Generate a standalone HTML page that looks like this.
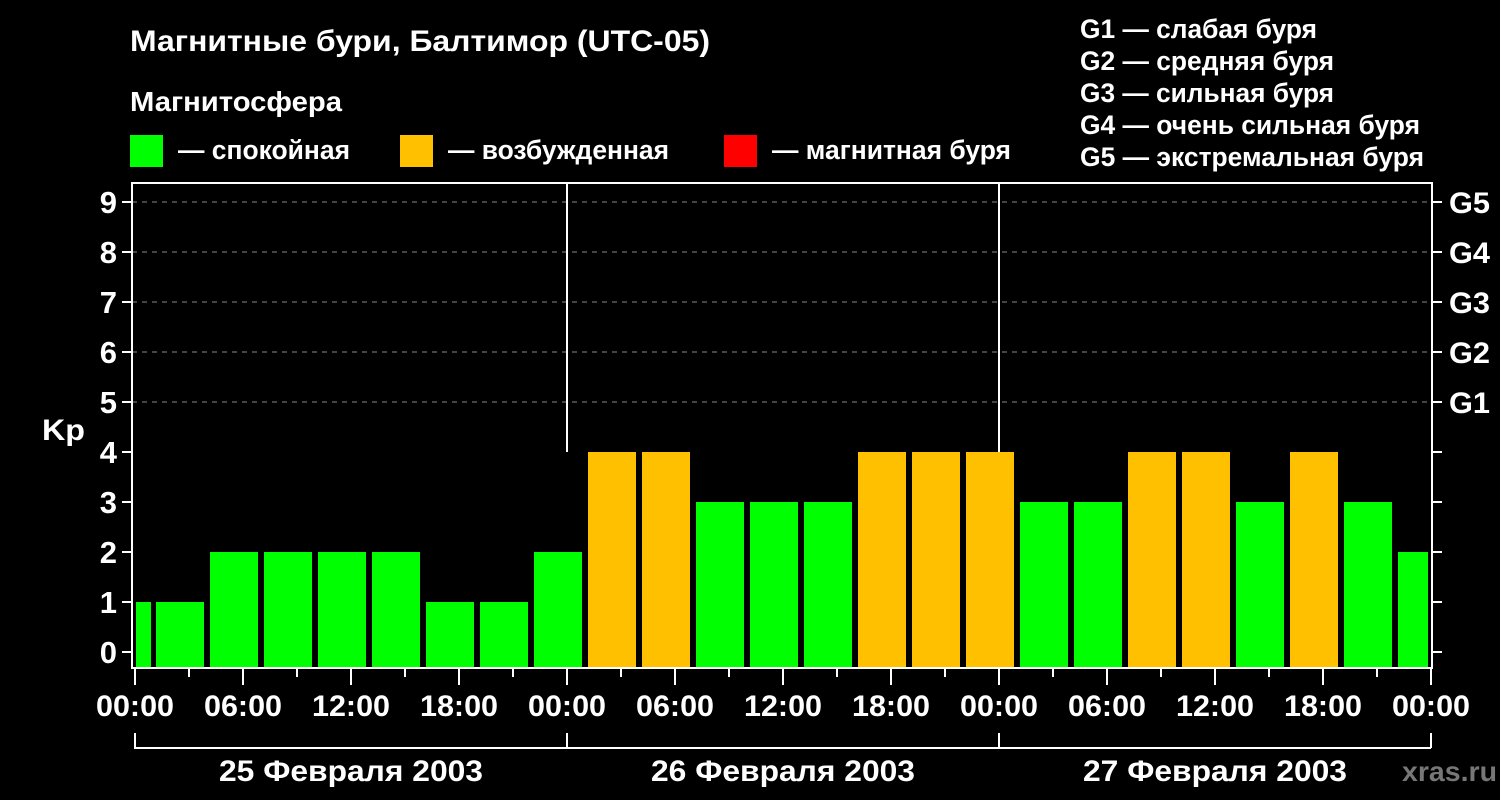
<!DOCTYPE html>
<html><head><meta charset="utf-8"><style>
html,body{margin:0;padding:0;background:#000;}
svg{display:block;font-family:"Liberation Sans",Arial,sans-serif;font-weight:bold;}
</style></head><body>
<svg width="1500" height="800" viewBox="0 0 1500 800" xmlns="http://www.w3.org/2000/svg">
<rect width="1500" height="800" fill="#000"/>
<g fill="#fff">
<text x="130" y="51" font-size="30" textLength="580" lengthAdjust="spacingAndGlyphs">Магнитные бури, Балтимор (UTC-05)</text>
<text x="130" y="111" font-size="28" textLength="212" lengthAdjust="spacingAndGlyphs">Магнитосфера</text>
<text x="178" y="159" font-size="27" textLength="172" lengthAdjust="spacingAndGlyphs">— спокойная</text>
<text x="448" y="159" font-size="27" textLength="221" lengthAdjust="spacingAndGlyphs">— возбужденная</text>
<text x="772" y="159" font-size="27" textLength="239" lengthAdjust="spacingAndGlyphs">— магнитная буря</text>
<text x="1080" y="38" font-size="27" textLength="237" lengthAdjust="spacingAndGlyphs">G1 — слабая буря</text>
<text x="1080" y="70" font-size="27" textLength="254" lengthAdjust="spacingAndGlyphs">G2 — средняя буря</text>
<text x="1080" y="102" font-size="27" textLength="254" lengthAdjust="spacingAndGlyphs">G3 — сильная буря</text>
<text x="1080" y="134" font-size="27" textLength="340" lengthAdjust="spacingAndGlyphs">G4 — очень сильная буря</text>
<text x="1080" y="166" font-size="27" textLength="344" lengthAdjust="spacingAndGlyphs">G5 — экстремальная буря</text>
</g>
<rect x="130" y="135" width="33" height="32" fill="#00ff00"/>
<rect x="400" y="135" width="33" height="32" fill="#ffc000"/>
<rect x="724" y="135" width="33" height="32" fill="#ff0000"/>

<g stroke="#888" stroke-width="1" stroke-dasharray="5,5">
<line x1="132" y1="202" x2="1432" y2="202"/>
<line x1="132" y1="252" x2="1432" y2="252"/>
<line x1="132" y1="302" x2="1432" y2="302"/>
<line x1="132" y1="352" x2="1432" y2="352"/>
<line x1="132" y1="402" x2="1432" y2="402"/>
</g>

<g>
<rect x="136" y="602" width="15" height="66" fill="#00ff00"/>
<rect x="156" y="602" width="48" height="66" fill="#00ff00"/>
<rect x="210" y="552" width="48" height="116" fill="#00ff00"/>
<rect x="264" y="552" width="48" height="116" fill="#00ff00"/>
<rect x="318" y="552" width="48" height="116" fill="#00ff00"/>
<rect x="372" y="552" width="48" height="116" fill="#00ff00"/>
<rect x="426" y="602" width="48" height="66" fill="#00ff00"/>
<rect x="480" y="602" width="48" height="66" fill="#00ff00"/>
<rect x="534" y="552" width="48" height="116" fill="#00ff00"/>
<rect x="588" y="452" width="48" height="216" fill="#ffc000"/>
<rect x="642" y="452" width="48" height="216" fill="#ffc000"/>
<rect x="696" y="502" width="48" height="166" fill="#00ff00"/>
<rect x="750" y="502" width="48" height="166" fill="#00ff00"/>
<rect x="804" y="502" width="48" height="166" fill="#00ff00"/>
<rect x="858" y="452" width="48" height="216" fill="#ffc000"/>
<rect x="912" y="452" width="48" height="216" fill="#ffc000"/>
<rect x="966" y="452" width="48" height="216" fill="#ffc000"/>
<rect x="1020" y="502" width="48" height="166" fill="#00ff00"/>
<rect x="1074" y="502" width="48" height="166" fill="#00ff00"/>
<rect x="1128" y="452" width="48" height="216" fill="#ffc000"/>
<rect x="1182" y="452" width="48" height="216" fill="#ffc000"/>
<rect x="1236" y="502" width="48" height="166" fill="#00ff00"/>
<rect x="1290" y="452" width="48" height="216" fill="#ffc000"/>
<rect x="1344" y="502" width="48" height="166" fill="#00ff00"/>
<rect x="1398" y="552" width="30" height="116" fill="#00ff00"/>
</g>

<line x1="567" y1="182" x2="567" y2="452" stroke="#fff" stroke-width="2"/>
<line x1="999" y1="182" x2="999" y2="452" stroke="#fff" stroke-width="2"/>

<rect x="132" y="183" width="1300" height="485" fill="none" stroke="#fff" stroke-width="2"/>

<g stroke="#fff" stroke-width="2">
<path d="M122 202H132M122 252H132M122 302H132M122 352H132M122 402H132M122 452H132M122 502H132M122 552H132M122 602H132M122 652H132"/>
<path d="M1432 202H1442M1432 252H1442M1432 302H1442M1432 352H1442M1432 402H1442M1432 452H1442M1432 502H1442M1432 552H1442M1432 602H1442M1432 652H1442"/>
<path d="M135 669V685M243 669V685M351 669V685M459 669V685M567 669V685M675 669V685M783 669V685M891 669V685M999 669V685M1107 669V685M1215 669V685M1323 669V685M1431 669V685"/>
<path d="M189 669V677M297 669V677M405 669V677M513 669V677M621 669V677M729 669V677M837 669V677M945 669V677M1053 669V677M1161 669V677M1269 669V677M1377 669V677"/>
<path d="M135 733V748H1431M1431 733V748M567 733V748M999 733V748"/>
</g>

<g fill="#fff" font-size="31" text-anchor="end">
<text x="117" y="213">9</text><text x="117" y="263">8</text><text x="117" y="313">7</text>
<text x="117" y="363">6</text><text x="117" y="413">5</text><text x="117" y="463">4</text>
<text x="117" y="513">3</text><text x="117" y="563">2</text><text x="117" y="613">1</text>
<text x="117" y="663">0</text>
</g>
<g fill="#fff" font-size="30">
<text x="1449" y="213" textLength="41" lengthAdjust="spacingAndGlyphs">G5</text>
<text x="1449" y="263" textLength="41" lengthAdjust="spacingAndGlyphs">G4</text>
<text x="1449" y="313" textLength="41" lengthAdjust="spacingAndGlyphs">G3</text>
<text x="1449" y="363" textLength="41" lengthAdjust="spacingAndGlyphs">G2</text>
<text x="1449" y="413" textLength="41" lengthAdjust="spacingAndGlyphs">G1</text>
<text x="42" y="440" textLength="43" lengthAdjust="spacingAndGlyphs">Kp</text>
</g>
<g fill="#fff" font-size="30" text-anchor="middle">
<text x="135" y="716" textLength="78" lengthAdjust="spacingAndGlyphs">00:00</text>
<text x="243" y="716" textLength="78" lengthAdjust="spacingAndGlyphs">06:00</text>
<text x="351" y="716" textLength="78" lengthAdjust="spacingAndGlyphs">12:00</text>
<text x="459" y="716" textLength="78" lengthAdjust="spacingAndGlyphs">18:00</text>
<text x="567" y="716" textLength="78" lengthAdjust="spacingAndGlyphs">00:00</text>
<text x="675" y="716" textLength="78" lengthAdjust="spacingAndGlyphs">06:00</text>
<text x="783" y="716" textLength="78" lengthAdjust="spacingAndGlyphs">12:00</text>
<text x="891" y="716" textLength="78" lengthAdjust="spacingAndGlyphs">18:00</text>
<text x="999" y="716" textLength="78" lengthAdjust="spacingAndGlyphs">00:00</text>
<text x="1107" y="716" textLength="78" lengthAdjust="spacingAndGlyphs">06:00</text>
<text x="1215" y="716" textLength="78" lengthAdjust="spacingAndGlyphs">12:00</text>
<text x="1323" y="716" textLength="78" lengthAdjust="spacingAndGlyphs">18:00</text>
<text x="1431" y="716" textLength="78" lengthAdjust="spacingAndGlyphs">00:00</text>
<text x="351" y="781" textLength="264" lengthAdjust="spacingAndGlyphs">25 Февраля 2003</text>
<text x="783" y="781" textLength="264" lengthAdjust="spacingAndGlyphs">26 Февраля 2003</text>
<text x="1215" y="781" textLength="264" lengthAdjust="spacingAndGlyphs">27 Февраля 2003</text>
</g>
<text x="1402" y="781" fill="#777" font-size="28" textLength="95" lengthAdjust="spacingAndGlyphs">xras.ru</text>
</svg>
</body></html>
